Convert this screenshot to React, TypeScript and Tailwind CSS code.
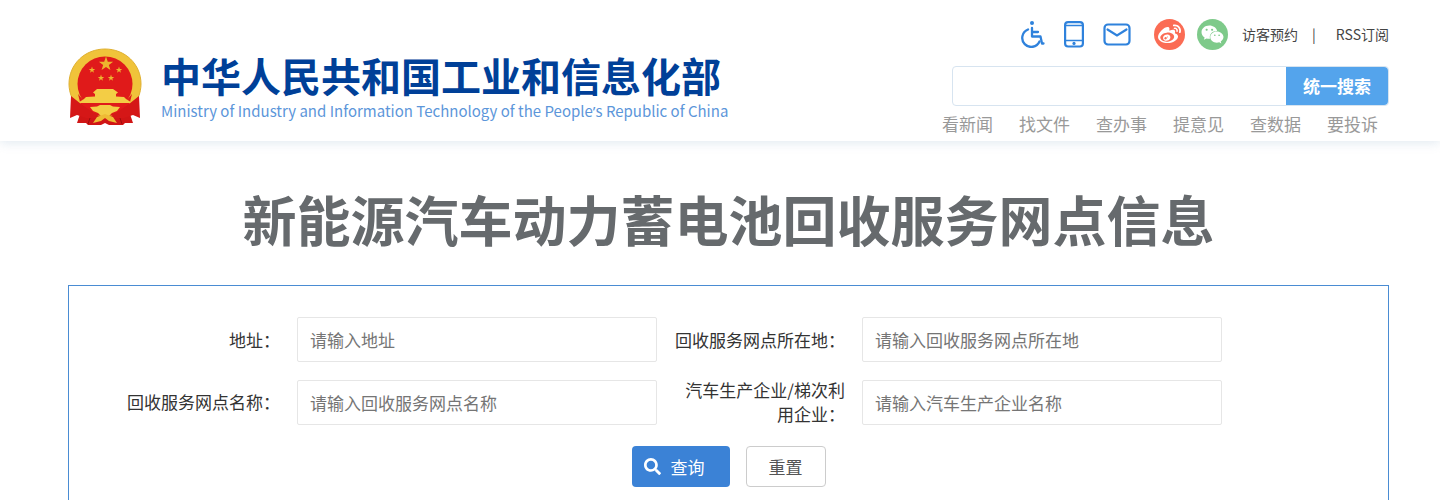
import React from 'react';
import { FaSearch, FaWeibo, FaWeixin } from 'react-icons/fa';

const quickLinks = ['看新闻', '找文件', '查办事', '提意见', '查数据', '要投诉'];

const Star = ({ x, y, s }: { x: number; y: number; s: number }) => (
  <path
    transform={`translate(${x} ${y}) scale(${s})`}
    d="M0-10 2.4-3.1 9.5-3.1 3.8 1.2 5.9 8.1 0 3.9-5.9 8.1-3.8 1.2-9.5-3.1-2.4-3.1Z"
    fill="#edb52e"
  />
);

const Emblem = () => (
  <svg viewBox="0 0 74 78" className="h-[78px] w-[74px] shrink-0" role="img" aria-label="国徽">
    {/* ribbon tails */}
    <path d="M10 54 12 66 9 75 18 75 20 77 33 77 37 75 41 77 55 77 57 75 65 75 62 66 64 54Z" fill="#d01515" />
    {/* wheat ring */}
    <path
      d="M37 1C57 1 73 16 73 36 73 45 69 54 64 60L52 67 22 67 10 60C5 54 1 45 1 36 1 16 17 1 37 1Z"
      fill="#f0c33a"
      stroke="#e0b030"
      strokeWidth="1"
    />
    <circle cx="37" cy="36" r="27.5" fill="#e01a1a" />
    <path d="M10 46 17 54 57 54 64 46 61 58 47 67 27 67 13 58Z" fill="#e01a1a" />
    <Star x={38} y={16} s={0.75} />
    <Star x={24} y={22} s={0.34} />
    <Star x={51} y={22} s={0.34} />
    <Star x={33} y={30} s={0.34} />
    <Star x={43} y={30} s={0.34} />
    {/* gate tower */}
    <path
      d="M29 41 45 41 50 44.5 48 46 48 48.5 56 49 58 51 62 53.5 62 55 12 55 12 53.5 16 51 18 49 27 48.5 27 46 25 44.5Z"
      fill="#f3cd45"
    />
    {/* cog wheel and knot */}
    <path d="M22 59 29 58.5 32 57 42 57 45 58.5 52 59 49 63 44 65 41 68 33 68 30 65 25 63Z" fill="#f3cd45" />
    <path d="M3 48 13 56 26 65 31 66 28 70 18 70 9 67 2 70Z" fill="#d51717" />
    <path d="M71 48 61 56 48 65 43 66 46 70 56 70 65 67 72 70Z" fill="#d51717" />
    <path d="M29 69 37 66 45 69 49 75 41 73 37 70 33 73 25 75Z" fill="#eebb35" />
    <path d="M22 70 20 76M52 70 54 76" stroke="#9f0d0d" strokeWidth="1" />
  </svg>
);

const WheelchairIcon = () => (
  <svg
    viewBox="0 0 24 28"
    className="h-7 w-6"
    fill="none"
    stroke="#2f82dc"
    strokeWidth="2.3"
    strokeLinecap="round"
    strokeLinejoin="round"
  >
    <circle cx="11" cy="3" r="2" fill="#2f82dc" stroke="none" />
    <path d="M11 8V16.5H19.5L21 23.5H22.5M11.5 12H17" />
    <path d="M7 9.5A9 9 0 1 0 18.5 21.5" />
  </svg>
);

const PhoneIcon = () => (
  <svg viewBox="0 0 20 28" className="h-7 w-5" fill="none" stroke="#2f82dc" strokeWidth="2.2">
    <rect x="1.1" y="2.1" width="17.8" height="24.4" rx="3" />
    <path d="M1 5.5H19M1 20.5H19" strokeWidth="1.6" />
    <circle cx="10" cy="23.4" r="1.6" fill="#2f82dc" stroke="none" />
  </svg>
);

const MailIcon = () => (
  <svg viewBox="0 0 28 28" className="size-7" fill="none" stroke="#2f82dc" strokeWidth="2.2">
    <rect x="1.5" y="4.5" width="25" height="20" rx="3.5" />
    <path d="M4.5 9.5 14 15.5 23.5 9.5" strokeLinecap="round" />
  </svg>
);

const Field = ({ id, label, hint }: { id: string; label: string; hint: string }) => (
  <>
    <label htmlFor={id} className="pr-[17px] pl-[15px] text-right leading-6">
      {label}
    </label>
    <input
      id={id}
      type="text"
      placeholder={hint}
      className="h-[45px] w-full rounded-xs border border-[#e6e6e6] px-3 outline-none placeholder:text-[#757575]"
    />
  </>
);

const Header = () => (
  <header className="flex h-[141px] items-start justify-between bg-white pr-[51px] pl-[68px] shadow-[0_2px_10px_rgba(190,208,224,0.45)]">
    <a href="#" className="mt-12 flex items-start gap-[19px]">
      <Emblem />
      <span className="flex flex-col whitespace-nowrap">
        <span className="text-[40px] leading-[54px] font-bold text-[#004098]">中华人民共和国工业和信息化部</span>
        <span className="text-[15px] leading-[18px] text-[#5c96da]">
          Ministry of Industry and Information Technology of the People
          <span className="font-['Noto_Sans',sans-serif]">’</span>s Republic of China
        </span>
      </span>
    </a>

    <div className="flex w-[447px] flex-col pt-[18px]">
      <div className="flex h-8 items-center justify-end text-sm text-[#444]">
        <a href="#" aria-label="无障碍" className="mr-[19px]"><WheelchairIcon /></a>
        <a href="#" aria-label="手机版" className="mr-[19px]"><PhoneIcon /></a>
        <a href="#" aria-label="邮箱" className="mr-[23px]"><MailIcon /></a>
        <a
          href="#"
          aria-label="微博"
          className="mr-3 flex size-[31px] items-center justify-center rounded-full bg-[#fb6c54] text-white"
        >
          <FaWeibo size={23} />
        </a>
        <a
          href="#"
          aria-label="微信"
          className="mr-[14px] flex size-[31px] items-center justify-center rounded-full bg-[#7eca8a] text-white"
        >
          <FaWeixin size={23} />
        </a>
        <a href="#">访客预约</a>
        <span className="mr-5 ml-[14px]">|</span>
        <a href="#">RSS订阅</a>
      </div>

      <form className="mt-4 ml-[10px] flex h-10 rounded-sm border border-[#d7e4f0]">
        <input type="text" aria-label="搜索" className="min-w-0 flex-1 px-3 outline-none" />
        <button type="button" className="w-[102px] rounded-r-sm bg-[#54a4ec] font-bold text-white">
          统一搜索
        </button>
      </form>

      <nav className="mt-[6px] flex gap-[26px] leading-6 text-[#999]">
        {quickLinks.map((item) => (
          <a key={item} href="#">{item}</a>
        ))}
      </nav>
    </div>
  </header>
);

export default function App() {
  return (
    <div className="h-screen overflow-hidden bg-white font-['Noto_Sans_CJK_SC',sans-serif] text-[17px] text-[#333]">
      <Header />

      <main className="pr-[51px] pl-[68px]">
        <h1 className="pt-[38px] pb-[26px] text-center text-[54px] leading-[80px] font-bold text-[#666a6d]">
          新能源汽车动力蓄电池回收服务网点信息
        </h1>

        <form className="h-[300px] border border-[#4a8cd3] pt-[31px]">
          <div className="grid grid-cols-[228fr_360fr_205fr_360fr_166fr] items-center gap-y-4">
            <Field id="address" label="地址：" hint="请输入地址" />
            <Field id="location" label="回收服务网点所在地：" hint="请输入回收服务网点所在地" />
            <span />
            <Field id="name" label="回收服务网点名称：" hint="请输入回收服务网点名称" />
            <Field id="company" label="汽车生产企业/梯次利用企业：" hint="请输入汽车生产企业名称" />
            <span />
          </div>

          <div className="mt-5 flex justify-center gap-4">
            <button
              type="button"
              className="flex h-[41px] w-[98px] items-center gap-[10px] rounded-sm bg-[#3b82d6] pl-3 text-white"
            >
              <FaSearch size={17} />
              查询
            </button>
            <button type="reset" className="h-[41px] w-20 rounded-sm border border-[#ccc] bg-white text-[#555]">
              重置
            </button>
          </div>
        </form>
      </main>
    </div>
  );
}
